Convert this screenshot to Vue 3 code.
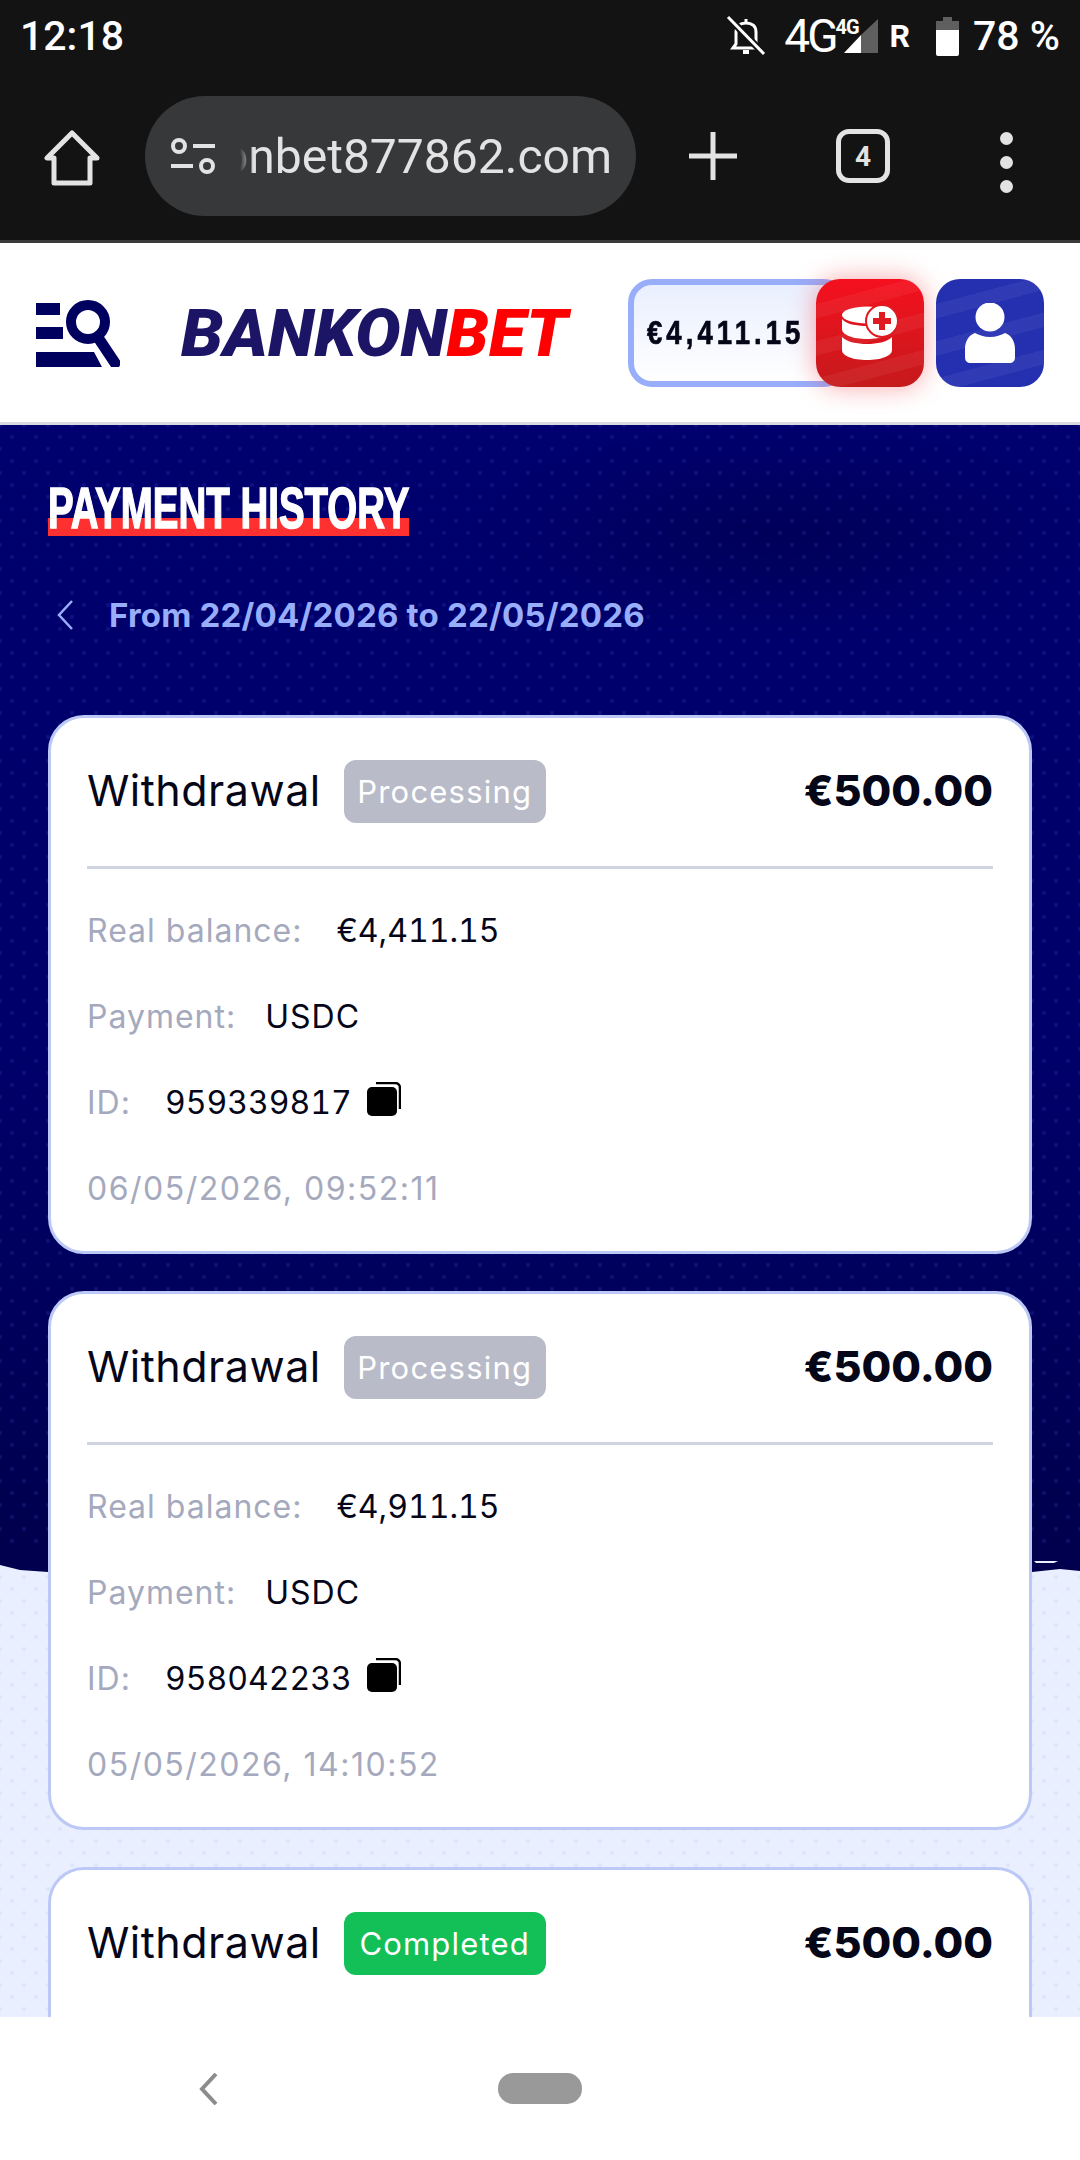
<template>
  <div class="phone">
    <div class="chrome">
      <div class="status">
        <span class="time">12:18</span>
        <div class="status-right">
          <svg class="bell" width="40" height="42" viewBox="0 0 40 42" fill="none" stroke="#fff" stroke-width="3">
            <path d="M20 4v4M10 17c0-6 4-9 10-9s10 3 10 9v12l3 4H7l3-4z" />
            <path d="M17 37h6" stroke-width="4" />
            <path d="M3 3l35 36" stroke="#131313" stroke-width="7" />
            <path d="M2 2l36 37" />
          </svg>
          <span class="net">4G</span>
          <div class="signal-wrap">
            <svg width="35" height="34" viewBox="0 0 35 34">
              <path d="M34 0v34H17V16z" fill="#5f5f5f" />
              <path d="M17 16v18H0z" fill="#fff" />
            </svg>
            <span class="net-small">4G</span>
          </div>
          <span class="roam">R</span>
          <svg class="battery" width="23" height="39" viewBox="0 0 23 39">
            <path d="M7 0h9v4h7v13H0V4h7z" fill="#5f5f5f" />
            <path d="M0 13h23v24a2 2 0 0 1-2 2H2a2 2 0 0 1-2-2z" fill="#fff" />
          </svg>
          <span class="pct">78 %</span>
        </div>
      </div>
      <div class="toolbar">
        <svg class="home" width="56" height="56" viewBox="0 0 56 56" fill="none" stroke="#e3e3e3" stroke-width="5" stroke-linejoin="round">
          <path d="M28 3L3 28h7v25h36V28h7z" />
        </svg>
        <div class="url">
          <svg width="46" height="38" viewBox="0 0 46 38" fill="none" stroke="#e3e3e3" stroke-width="4">
            <circle cx="9" cy="9" r="6" />
            <path d="M23 9h22M1 29h22" />
            <circle cx="37" cy="29" r="6" />
          </svg>
          <div class="url-clip"><span>bankonbet877862.com</span></div>
        </div>
        <svg class="plus" width="48" height="48" viewBox="0 0 48 48" stroke="#e3e3e3" stroke-width="5">
          <path d="M24 0v48M0 24h48" />
        </svg>
        <div class="tabs">4</div>
        <div class="dots"><i></i><i></i><i></i></div>
      </div>
    </div>

    <header class="site-head">
      <svg class="search" width="84" height="68" viewBox="0 0 84 68">
        <path d="M0 4h24v12H0zM0 28h27v12H0zM0 53h58l8 15H0z" fill="#00005f" />
        <circle cx="52" cy="23" r="17" fill="none" stroke="#00005f" stroke-width="10" />
        <path d="M63 40l16 24" stroke="#00005f" stroke-width="11" stroke-linecap="round" />
      </svg>
      <div class="logo"><span class="logo-text"><span class="bk">BANKON</span><span class="bt">BET</span></span></div>
      <div class="wallet">
        <div class="amount"><span>€4,411.15</span></div>
        <button class="square red">
          <svg width="56" height="56" viewBox="0 0 56 56">
            <ellipse cx="25" cy="10" rx="25" ry="8.5" fill="#fff" />
            <path d="M0 14c4 5 14 7 25 7s21-2 25-7v10c0 6-11 10-25 10S0 30 0 24z" fill="#fff" />
            <path d="M0 32c5 5 15 7 25 7s20-2 25-7v13c0 6-11 10-25 10S0 51 0 45z" fill="#fff" />
            <circle cx="40" cy="16" r="16" fill="#fff" stroke="#df1a20" stroke-width="2" />
            <path d="M40 7v18M31 16h18" stroke="#df1a20" stroke-width="6" />
          </svg>
        </button>
        <button class="square blue">
          <svg width="50" height="60" viewBox="0 0 50 60" fill="#fff">
            <circle cx="25" cy="14" r="14.5" />
            <path d="M10 30c4 2 9 4 15 4s11-2 15-4c6 2 10 8 10 16v8c0 4-2 6-6 6H6c-4 0-6-2-6-6v-8c0-8 4-14 10-16z" />
          </svg>
        </button>
      </div>
    </header>

    <main class="content">
      <div class="navy"></div>
      <svg class="edge" width="1080" height="30" viewBox="0 0 1080 30" preserveAspectRatio="none">
        <path d="M0 0h1080v21l-20-2-28 3H48L20 20 0 15z" fill="#00004e" />
        <path d="M1034 11h24l-4 2h-18z" fill="#e9effe" />
      </svg>
      <div class="inner">
        <h1><span>PAYMENT HISTORY</span></h1>
        <div class="range">
          <svg width="16" height="30" viewBox="0 0 16 30" fill="none" stroke="#98aefb" stroke-width="2.5">
            <path d="M15 1L2 15l13 14" />
          </svg>
          <span>From 22/04/2026 to 22/05/2026</span>
        </div>
        <article v-for="p in payments" :key="p.id" class="card">
          <div class="card-top">
            <span class="kind">Withdrawal</span>
            <span :class="['badge', p.status.toLowerCase()]">{{ p.status }}</span>
            <span class="sum">€500.00</span>
          </div>
          <div class="row"><span class="lbl">Real balance:</span><span class="num">{{ p.balance }}</span></div>
          <div class="row tight"><span class="lbl">Payment:</span><span>USDC</span></div>
          <div class="row">
            <span class="lbl">ID:</span>
            <span class="num">{{ p.id }}</span>
            <svg class="copy" width="34" height="34" viewBox="0 0 34 34">
              <path d="M9 1h19a5 5 0 0 1 5 5v21" fill="none" stroke="#000" stroke-width="2.5" />
              <rect x="0" y="5" width="30" height="29" rx="5" fill="#000" />
            </svg>
          </div>
          <div class="row lbl date">{{ p.date }}</div>
        </article>
      </div>
    </main>

    <footer class="nav">
      <svg width="20" height="32" viewBox="0 0 20 32" fill="none" stroke="#8c8c8c" stroke-width="4">
        <path d="M18 1L4 16l14 15" />
      </svg>
      <div class="pill"></div>
    </footer>
  </div>
</template>

<script setup>
const payments = [
  { id: "959339817", status: "Processing", balance: "€4,411.15", date: "06/05/2026, 09:52:11" },
  { id: "958042233", status: "Processing", balance: "€4,911.15", date: "05/05/2026, 14:10:52" },
  { id: "957100462", status: "Completed", balance: "€5,411.15", date: "04/05/2026, 11:26:40" }
];
</script>

<style>
body { background: #fff; }
</style>

<style scoped>
.phone { width: 1080px; height: 2160px; display: flex; flex-direction: column; overflow: hidden; font-family: Inter, "Liberation Sans", sans-serif; }

.chrome { height: 243px; flex: none; background: #131313; border-bottom: 3px solid #3a3a3c; box-sizing: border-box; color: #fff; font-family: Roboto, sans-serif; }
.status { height: 72px; display: flex; align-items: center; justify-content: space-between; padding: 0 20px; }
.time { font-size: 41px; font-weight: 500; }
.status-right { display: flex; align-items: center; }
.bell { margin-right: 18px; }
.net { font-size: 46px; letter-spacing: -3px; margin-right: 8px; }
.signal-wrap { position: relative; margin-right: 11px; height: 34px; }
.signal-wrap svg { display: block; }
.net-small { position: absolute; left: -8px; top: -4px; font-size: 20px; font-weight: 700; letter-spacing: -1px; }
.roam { font-size: 32px; font-weight: 700; margin-right: 26px; }
.battery { margin-right: 14px; }
.pct { font-size: 41px; font-weight: 500; }

.toolbar { height: 168px; display: flex; align-items: flex-start; padding-top: 24px; box-sizing: border-box; }
.home { margin: 34px 0 0 44px; }
.url { width: 491px; height: 120px; margin-left: 45px; background: #37383a; border-radius: 60px; display: flex; align-items: center; padding: 0 24px 0 25px; box-sizing: border-box; }
.url-clip { flex: 1; min-width: 0; margin-left: 20px; overflow: hidden; display: flex; justify-content: flex-end; color: #e3e3e3; font-size: 48px; -webkit-mask-image: linear-gradient(90deg, transparent 4px, #000 18px); mask-image: linear-gradient(90deg, transparent 4px, #000 18px); }
.url-clip span { flex: none; }
.plus { margin: 36px 0 0 53px; }
.tabs { width: 54px; height: 54px; margin: 33px 0 0 99px; box-sizing: border-box; border: 5px solid #e3e3e3; border-radius: 13px; display: flex; align-items: center; justify-content: center; color: #e3e3e3; font-size: 28px; font-weight: 700; }
.dots { margin: 36px 0 0 110px; display: flex; flex-direction: column; gap: 11px; }
.dots i { width: 13px; height: 13px; border-radius: 50%; background: #e3e3e3; }

.site-head { height: 182px; flex: none; box-sizing: border-box; background: #fff; border-bottom: 3px solid #d8dae0; display: flex; align-items: center; padding: 0 36px; }
.search { flex: none; }
.logo { margin-left: 61px; width: 392px; flex: none; }
.logo-text { display: inline-block; font: italic 900 67px Roboto, "Liberation Sans", sans-serif; white-space: nowrap; transform: scaleX(1.01); transform-origin: left center; }
.bk { color: #1c1464; }
.bt { color: #ff0000; }
.wallet { margin-left: auto; display: flex; align-items: center; position: relative; }
.amount { width: 220px; height: 108px; box-sizing: border-box; margin-right: -32px; padding-left: 13px; border: 6px solid #98aefb; border-radius: 24px; background: linear-gradient(180deg, #e9effe, #fff); display: flex; align-items: center; color: #050618; overflow: hidden; }
.amount span { display: inline-block; font: 700 34px "Liberation Sans", sans-serif; letter-spacing: 5px; -webkit-text-stroke: .7px currentColor; transform: scaleX(.81); transform-origin: left center; white-space: nowrap; }
.square { width: 108px; height: 108px; padding: 0; border: 0; border-radius: 24px; display: flex; align-items: center; justify-content: center; position: relative; }
.red { background: repeating-linear-gradient(-15deg, transparent 0 22px, rgba(255,255,255,.05) 22px 36px), linear-gradient(180deg, #f5101e, #c51a1c); box-shadow: 0 0 26px rgba(240,30,40,.4); margin-right: 12px; }
.blue { background: repeating-linear-gradient(-15deg, transparent 0 22px, rgba(255,255,255,.05) 22px 36px), #2530b0; }

.content { flex: 1; min-height: 0; position: relative; background: radial-gradient(circle, rgba(120,140,230,.1) 1.5px, transparent 2.5px) 0 0 / 24px 24px, radial-gradient(circle, rgba(120,140,230,.1) 1.5px, transparent 2.5px) 12px 12px / 24px 24px, #e9effe; }
.navy { position: absolute; left: 0; right: 0; top: 0; height: 1125px; background: radial-gradient(circle, rgba(70,80,210,.2) 1.5px, transparent 2.5px) 0 0 / 24px 24px, radial-gradient(circle, rgba(70,80,210,.2) 1.5px, transparent 2.5px) 12px 12px / 24px 24px, radial-gradient(ellipse 320px 110px at 780px 110px, rgba(0,0,50,.35), transparent), linear-gradient(180deg, #00006e 0, #00006a 55%, #00004e 100%); }
.edge { position: absolute; left: 0; top: 1125px; }
.inner { position: relative; padding: 0 48px; }

h1 { margin: 0; padding-top: 59px; height: 111px; box-sizing: border-box; font: 700 57px/48px "Liberation Sans", sans-serif; color: #fff; -webkit-text-stroke: 1.5px #fff; }
h1 span { display: inline-block; height: 52px; background: linear-gradient(180deg, transparent 0 34px, #ff3030 34px 52px); white-space: nowrap; transform: scaleX(.675); transform-origin: left center; }
.range { height: 62px; margin: 48px 0 69px 9px; display: flex; align-items: center; gap: 36px; font-size: 33px; font-weight: 700; color: #98aefb; letter-spacing: .2px; }

.card { height: 539px; box-sizing: border-box; margin-bottom: 37px; padding: 0 36px; background: #fff; border: 3px solid #bcc8f5; border-radius: 36px; font-size: 32px; letter-spacing: 1px; color: #050618; }
.card-top { height: 151px; margin-bottom: 18px; border-bottom: 3px solid #d0d3e0; display: flex; align-items: center; padding-bottom: 2px; box-sizing: border-box; }
.kind { font-size: 43px; letter-spacing: .5px; margin-top: -2px; }
.badge { margin-left: 23px; height: 63px; width: 202px; border-radius: 12px; display: flex; align-items: center; justify-content: center; color: #fff; font-size: 31px; letter-spacing: 1.2px; }
.processing { background: #b9bbc9; }
.completed { background: #13c057; }
.sum { margin-left: auto; font-size: 43px; font-weight: 800; letter-spacing: 0; margin-top: -2px; }
.row { height: 86px; display: flex; align-items: center; gap: 34px; }
.tight { gap: 29px; }
.num { font-variant-numeric: tabular-nums; letter-spacing: 0; }
.date { letter-spacing: 1.5px; }
.lbl { color: #a5a9bd; }
.copy { margin-left: -19px; margin-top: -6px; }

.nav { height: 143px; flex: none; background: #fff; position: relative; display: flex; align-items: flex-start; padding-top: 56px; box-sizing: border-box; }
.nav svg { margin-left: 198px; }
.pill { margin-left: 280px; width: 84px; height: 31px; border-radius: 15px; background: #999; }
</style>
